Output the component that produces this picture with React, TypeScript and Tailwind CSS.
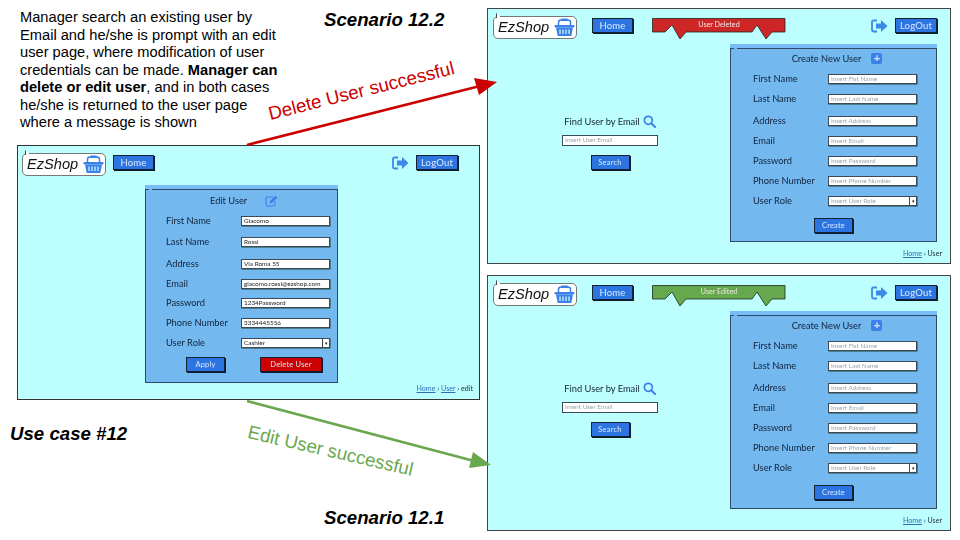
import React from "react";

const Basket = () => (
  <svg width="21" height="19" viewBox="0 0 21 19" className="shrink-0">
    <path d="M4.5 8 V4.5 Q4.5 2 7 2 H14 Q16.5 2 16.5 4.5 V8" fill="none" stroke="#3b82e8" strokeWidth="1.5" />
    <rect x="7" y="0.5" width="7" height="2.4" rx="1" fill="#3b82e8" />
    <rect x="0.5" y="7" width="20" height="2.4" rx="1" fill="#3b82e8" />
    <path d="M2 9.5 H19 L17.3 18 H3.7 Z" fill="#3b82e8" />
    <path d="M6 11.5 V16 M9 11.5 V16 M12 11.5 V16 M15 11.5 V16" stroke="#c9f3ff" strokeWidth="1.3" />
  </svg>
);

const Logo = () => (
  <div className="relative flex h-[23px] w-[84px] shrink-0 items-center gap-[5px] rounded-[5px] border border-[#777] bg-white pl-[4px]">
    <span className="absolute left-[2px] top-[-4px] h-[5px] w-[4px] border-l border-[#444] bg-white [clip-path:polygon(0_0,100%_70%,100%_100%,0_100%)]" />
    <span className="font-['Liberation_Sans'] text-[14.6px] italic leading-none text-[#111]">EzShop</span>
    <Basket />
  </div>
);

const Btn = ({ children, w, bg = "bg-[#2c74e0]" }: { children: React.ReactNode; w: string; bg?: string }) => (
  <div className={`flex h-[15px] shrink-0 items-center justify-center border border-[#123] shadow-[1px_1px_0_#0b1a30] ${w} ${bg} font-['Lato'] text-[9.5px] leading-none tracking-[0.2px] text-[#dbe9ff]`}>
    {children}
  </div>
);

const LogoutIcon = () => (
  <svg width="17" height="14" viewBox="0 0 17 14" className="shrink-0">
    <path d="M6 1.5 H2.5 Q1 1.5 1 3 V11 Q1 12.5 2.5 12.5 H6" fill="none" stroke="#3b8ae8" strokeWidth="1.8" />
    <path d="M5 4.5 H10 V1 L16.5 7 L10 13 V9.5 H5 Z" fill="#3b8ae8" />
  </svg>
);

const Banner = ({ text, color }: { text: string; color: string }) => (
  <div className="relative h-[22px] w-[134px] shrink-0">
    <svg width="134" height="22" viewBox="0 0 134 22" className="absolute inset-0">
      <polygon
        points="0.5,0.5 133,0.5 133,14 120,14 114,21 105,7 100,14 34,14 28,21 20,7 13,14 0.5,14"
        fill={color}
        stroke="#1f2a1f"
        strokeWidth="0.8"
      />
    </svg>
    <span className="absolute inset-x-0 top-[2px] text-center font-['Lato'] text-[7.2px] leading-[9px] text-[#f4e6e6]">{text}</span>
  </div>
);

const Field = ({ label, value, placeholder, select, labelW, labelPl, mt }: { label: string; value?: string; placeholder?: boolean; select?: boolean; labelW: string; labelPl: string; mt: string }) => (
  <div className={`flex h-[20px] items-center ${mt}`}>
    <span className={`${labelW} ${labelPl} shrink-0 font-['Lato'] text-[9.3px] leading-none text-[#10233a]`}>{label}</span>
    <div className="relative flex h-[10px] w-[89px] items-center border border-[#3c4a58] bg-white pl-[2px] shadow-[0.5px_0.5px_0_#243]">
      <span className={`font-['Lato'] text-[6.4px] leading-none whitespace-nowrap ${placeholder ? "text-[#9aa4ad]" : "text-[#222]"}`}>{value}</span>
      {select && (
        <span className="absolute right-0 top-0 flex h-full w-[7px] items-center justify-center border-l border-[#3c4a58] bg-white text-[5px] leading-none text-[#222]">▾</span>
      )}
    </div>
  </div>
);

const SearchIcon = () => (
  <svg width="13" height="13" viewBox="0 0 13 13" className="shrink-0">
    <circle cx="5.3" cy="5.3" r="4" fill="none" stroke="#3b82e8" strokeWidth="1.7" />
    <path d="M8.3 8.3 L12 12" stroke="#3b82e8" strokeWidth="2" strokeLinecap="round" />
  </svg>
);

const PlusIcon = () => (
  <div className="flex h-[11px] w-[11px] items-center justify-center rounded-[2px] bg-[#3b82e8] text-[11px] font-bold leading-none text-[#cfe6ff]">+</div>
);

const EditIcon = () => (
  <svg width="13" height="12" viewBox="0 0 13 12" className="block">
    <path d="M8 2 H2.5 Q1 2 1 3.5 V9.5 Q1 11 2.5 11 H8.5 Q10 11 10 9.5 V6" fill="none" stroke="#3b82e8" strokeWidth="1.1" />
    <path d="M4.5 8.5 L5 6 L10.5 0.7 L12.5 2.5 L7 8 Z" fill="#3b82e8" />
  </svg>
);

const Panel = ({ children, w, h }: { children: React.ReactNode; w: string; h: string }) => (
  <div className={`relative flex shrink-0 flex-col border border-[#2e4a66] bg-[#74b8f0] shadow-[0_-4px_0_#78bdf5] ${w} ${h}`}>
    <span className="absolute left-[3px] top-[-1px] h-[1px] w-[3px] bg-[#74b8f0]" />
    {children}
  </div>
);

const Crumb = ({ extra }: { extra?: string }) => (
  <div className="whitespace-nowrap font-['Lato'] text-[7.1px] leading-none text-[#1a2b3a]">
    <span className="text-[#2a6fb8] underline">Home</span> › {extra ? <span className="text-[#2a6fb8] underline">User</span> : "User"}
    {extra ? ` › ${extra}` : ""}
  </div>
);

const Header = ({ banner, homeMl }: { banner?: React.ReactNode; homeMl: string }) => (
  <div className="flex items-start">
    <Logo />
    <div className={`${homeMl} mt-[2px]`}>
      <Btn w="w-[41px]">Home</Btn>
    </div>
    {banner && <div className="ml-[19px] mt-[2px]">{banner}</div>}
    <div className="ml-auto mt-[2px] flex items-center gap-[7px]">
      <LogoutIcon />
      <Btn w="w-[42px]">LogOut</Btn>
    </div>
  </div>
);

const createRows = [
  ["First Name", "Insert Fist Name", "mt-0"],
  ["Last Name", "Insert Last Name", "mt-0"],
  ["Address", "Insert Address", "mt-[2px]"],
  ["Email", "Insert Email", "mt-0"],
  ["Password", "Insert Password", "mt-0"],
  ["Phone Number", "Insert Phone Number", "mt-0"],
];

const editRows = [
  ["First Name", "Giacomo", "mt-0"],
  ["Last Name", "Rossi", "mt-px"],
  ["Address", "Via Roma 55", "mt-[2px]"],
  ["Email", "giacomo.rossi@ezshop.com", "mt-0"],
  ["Password", "1234Password", "mt-[-1px]"],
  ["Phone Number", "3334445556", "mt-0"],
];

const CreateWindow = ({ top, banner }: { top: string; banner: React.ReactNode }) => (
  <div className={`absolute left-[487px] ${top} flex h-[256px] w-[464px] flex-col border border-[#444] bg-[#bdffff] pl-[5px] pr-[13px] pt-[7px] blur-[0.4px]`}>
    <Header banner={banner} homeMl="ml-[15px]" />
    <div className="mt-[8px] flex">
      <div className="ml-[69px] flex w-[96px] flex-col items-center pt-[67px]">
        <div className="flex items-center gap-[3px] whitespace-nowrap">
          <span className="font-['Lato'] text-[9.3px] leading-none text-[#10233a]">Find User by Email</span>
          <SearchIcon />
        </div>
        <div className="mt-[7px] flex h-[11px] w-[96px] items-center border border-[#3c4a58] bg-white pl-[2px]">
          <span className="font-['Lato'] text-[6.4px] leading-none text-[#9aa4ad]">Insert User Email</span>
        </div>
        <div className="mt-[9px]">
          <Btn w="w-[39px]"><span className="text-[7.5px]">Search</span></Btn>
        </div>
      </div>
      <div className="ml-[72px]">
        <Panel w="w-[207px]" h="h-[194px]">
          <div className="mt-[4px] flex items-center justify-center gap-[10px] pl-[7px]">
            <span className="font-['Lato'] text-[9.3px] leading-none text-[#10233a]">Create New User</span>
            <PlusIcon />
          </div>
          <div className="mt-[5px]">
            {createRows.map(([l, v, m]) => (
              <Field key={l} label={l} value={v} mt={m} placeholder labelPl="pl-[22px]" labelW="w-[97px]" />
            ))}
            <Field label="User Role" value="Insert User Role" mt="mt-0" placeholder select labelPl="pl-[22px]" labelW="w-[97px]" />
          </div>
          <div className="mt-[7px] flex justify-center">
            <Btn w="w-[39px]"><span className="text-[7.5px]">Create</span></Btn>
          </div>
        </Panel>
      </div>
    </div>
    <div className="mr-[-5px] mt-[8px] flex justify-end">
      <Crumb />
    </div>
  </div>
);

export default function App() {
  return (
    <div className="relative h-[540px] w-[960px] overflow-hidden bg-white font-['Liberation_Sans'] text-black">
      <p className="absolute left-[20px] top-[9px] text-[14.67px] leading-[17.5px]">
        Manager search an existing user by
        <br />
        Email and he/she is prompt with an edit
        <br />
        user page, where modification of user
        <br />
        credentials can be made. <b>Manager can</b>
        <br />
        <b>delete or edit user</b>, and in both cases
        <br />
        he/she is returned to the user page
        <br />
        where a message is shown
      </p>
      <p className="absolute left-[324px] top-[10px] text-[18.67px] font-bold italic leading-[20px]">Scenario 12.2</p>
      <p className="absolute left-[324px] top-[508px] text-[18.67px] font-bold italic leading-[20px]">Scenario 12.1</p>
      <p className="absolute left-[10px] top-[424px] text-[18.67px] font-bold italic leading-[20px]">Use case #12</p>

      {/* edit window */}
      <div className="absolute left-[17px] top-[145px] flex h-[255px] w-[463px] flex-col border border-[#333] bg-[#bdffff] pl-[4px] pr-[21px] pt-[7px] blur-[0.4px]">
        <Header homeMl="ml-[7px]" />
        <div className="ml-[123px] mt-[13px]">
          <Panel w="w-[193px]" h="h-[194px]">
            <div className="mt-[5px] flex items-center pl-[64px]">
              <span className="font-['Lato'] text-[9.3px] leading-none text-[#10233a]">Edit User</span>
              <span className="ml-[18px]"><EditIcon /></span>
            </div>
            <div className="mt-[4px]">
              {editRows.map(([l, v, m]) => (
                <Field key={l} label={l} value={v} mt={m} labelPl="pl-[20px]" labelW="w-[95px]" />
              ))}
              <Field label="User Role" value="Cashier" mt="mt-0" select labelPl="pl-[20px]" labelW="w-[95px]" />
            </div>
            <div className="mt-[4px] flex pl-[40px]">
              <Btn w="w-[39px]"><span className="text-[7.5px]">Apply</span></Btn>
              <Btn w="w-[62px] ml-[35px]" bg="bg-[#cc0000]"><span className="text-[7.5px]">Delete User</span></Btn>
            </div>
          </Panel>
        </div>
        <div className="mr-[-15px] mt-[2px] flex justify-end">
          <Crumb extra="edit" />
        </div>
      </div>

      <CreateWindow top="top-[8px]" banner={<Banner text="User Deleted" color="#cc2626" />} />
      <CreateWindow top="top-[275px]" banner={<Banner text="User Edited" color="#65a84e" />} />

      {/* arrows between windows */}
      <svg width="960" height="540" className="pointer-events-none absolute inset-0">
        <line x1="247" y1="145" x2="484" y2="85" stroke="#cc0000" strokeWidth="2.7" />
        <polygon points="497,82 474,78 479,95" fill="#cc0000" />
        <line x1="247" y1="401" x2="478" y2="462" stroke="#6aa84f" strokeWidth="2.7" />
        <polygon points="491,465 473,452 469,468" fill="#6aa84f" />
      </svg>
      <p className="absolute left-[266px] top-[80px] origin-center rotate-[-14deg] whitespace-nowrap text-[18.67px] leading-[22px] text-[#cc0000]">Delete User successful</p>
      <p className="absolute left-[246px] top-[440px] origin-center rotate-[13deg] whitespace-nowrap text-[18.67px] leading-[22px] text-[#6aa84f]">Edit User successful</p>
    </div>
  );
}
